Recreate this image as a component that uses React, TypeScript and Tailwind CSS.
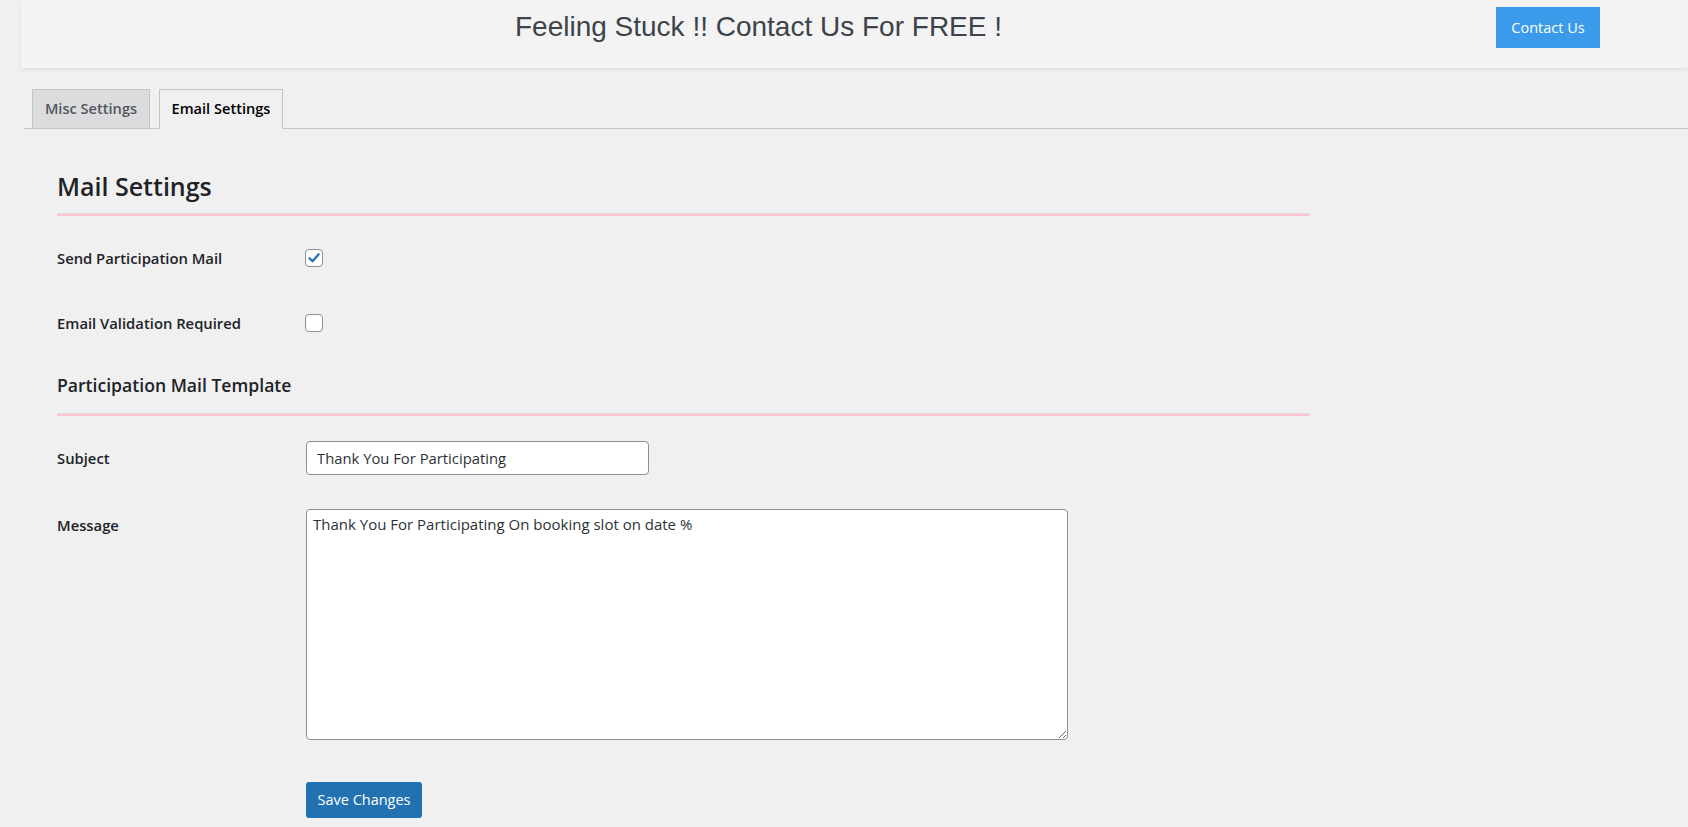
import { FC } from "react";

const Checkbox: FC<{ checked?: boolean }> = ({ checked }) => {
  return (
    <div className="w-[18px] h-[18px] rounded-[4px] border border-[#8c8f94] bg-white flex items-center justify-center">
      {checked && (
        <svg width="14" height="14" viewBox="0 0 14 14" fill="none">
          <path
            d="M2.5 7.2 L5.6 10.3 L11.6 3.2"
            stroke="#2271b1"
            strokeWidth="2.2"
            strokeLinecap="round"
            strokeLinejoin="round"
          />
        </svg>
      )}
    </div>
  );
};

const App: FC = () => {
  return (
    <div className="min-h-screen bg-[#f0f0f1] pl-[21px] font-['Open_Sans',sans-serif] text-[#1d2327]">
      {/* banner */}
      <header className="flex items-start h-[68px] bg-[#f3f3f3] shadow-[0_2px_4px_rgba(0,0,0,0.07)]">
        <h1 className="w-[1475px] pt-[10px] text-center font-['Liberation_Sans',Arial,sans-serif] text-[28px] leading-[34px] text-[#3c434a]">
          Feeling Stuck !! Contact Us For FREE !
        </h1>
        <a className="mt-[7px] flex items-center justify-center w-[104px] h-[41px] bg-[#3b9ae9] text-white text-[14.5px]">
          Contact Us
        </a>
      </header>

      {/* tabs */}
      <nav className="ml-[3px] mt-[21px] flex gap-[9px] pl-[8px] border-b border-[#c3c4c7]">
        <div className="-mb-px h-[40px] w-[118px] flex items-center justify-center border border-[#c3c4c7] bg-[#dcdcde] text-[14.6px] font-semibold text-[#50575e]">
          Misc Settings
        </div>
        <div className="-mb-px h-[40px] w-[124px] flex items-center justify-center border border-[#c3c4c7] border-b-[#f0f0f1] bg-[#f0f0f1] text-[14.6px] font-semibold text-[#000]">
          Email Settings
        </div>
      </nav>

      <div className="pl-[36px] w-[1289px]">
        <h2 className="mt-[41px] text-[25px] leading-[32px] font-semibold">Mail Settings</h2>
        <div className="mt-[11px] h-px bg-[#e0d9dc]" />
        <div className="h-[2px] bg-[#ffc6d2]" />

        <div className="mt-[9px] flex items-center h-[66px]">
          <div className="w-[248px] text-[14.8px] font-semibold">Send Participation Mail</div>
          <Checkbox checked />
        </div>
        <div className="flex items-center h-[66px] -mt-px">
          <div className="w-[248px] text-[14.8px] font-semibold">Email Validation Required</div>
          <Checkbox />
        </div>

        <h3 className="mt-[16px] text-[17.6px] leading-[26px] font-semibold">Participation Mail Template</h3>
        <div className="mt-[15px] h-px bg-[#e0d9dc]" />
        <div className="h-[2px] bg-[#ffc6d2]" />

        <div className="mt-[25px] flex items-center">
          <div className="w-[249px] text-[14.8px] font-semibold">Subject</div>
          <input
            type="text"
            defaultValue="Thank You For Participating"
            className="w-[343px] h-[34px] rounded-[4px] border border-[#8c8f94] bg-white px-[10px] text-[14.8px] text-[#2c3338] outline-none"
          />
        </div>

        <div className="mt-[34px] flex items-start">
          <div className="w-[249px] pt-[4px] text-[14.8px] leading-[24px] font-semibold">Message</div>
          <textarea
            defaultValue="Thank You For Participating On booking slot on date %"
            className="w-[762px] h-[231px] rounded-[4px] border border-[#8c8f94] bg-white px-[6px] pt-[3px] text-[15px] leading-[22px] text-[#2c3338] outline-none"
          />
        </div>

        <div className="mt-[42px] pl-[249px]">
          <button
            type="button"
            className="w-[116px] h-[36px] rounded-[3px] bg-[#2271b1] text-white text-[14.5px]"
          >
            Save Changes
          </button>
        </div>
      </div>
    </div>
  );
};

export default App;
